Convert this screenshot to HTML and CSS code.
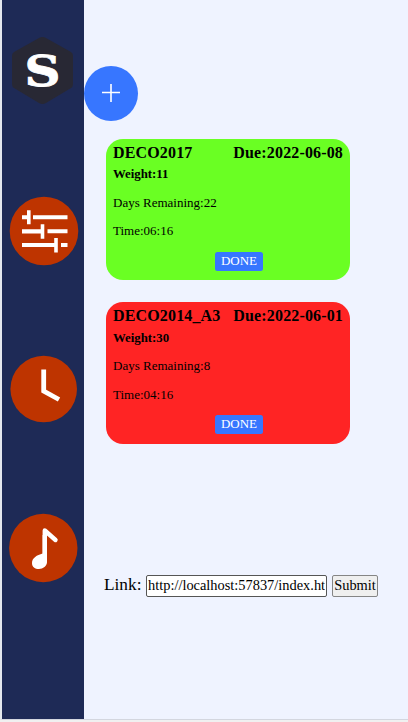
FILE: index.html
```
<!DOCTYPE html>
<html lang="en">
<head>
<meta charset="utf-8">
<title>Tasks</title>
<link rel="stylesheet" href="styles.css">
</head>
<body>
<div class="app">
  <nav class="sidebar">
    <svg class="logo" viewBox="0 0 64 70" width="64" height="70">
      <path d="M28 2Q31.500 0 35 2L60 16Q62 17 62 20V48Q62 51 60 52L35 67Q31.500 69 28 67L3 52Q1 51 1 48V20Q1 17 3 16Z" fill="#282834"/>
      <text class="logo-letter" x="13.500" y="49.500" textLength="36" lengthAdjust="spacingAndGlyphs">S</text>
    </svg>
    <svg class="tune" viewBox="0 0 70 70" width="70" height="70">
      <circle cx="35" cy="35" r="34.300" fill="#be3400"/>
      <g fill="#fff"><path d="M13 19.300h5v-5h3.600v14H18v-5h-5zM24 19.300h34.500v4H24zM13 33.300h18.700v-5h3.600v14.500h-3.600v-5.300H13zM38.500 33.300h20v4h-20zM13 47h32.200v-5h3.600v14.500h-3.600V51H13zM52 47h6.500v4H52z"/></g>
    </svg>
    <svg class="clock" viewBox="0 0 68 68" width="68" height="68">
      <circle cx="34.700" cy="34" r="33.300" fill="#be3400"/>
      <path d="M34.700 14.500V36L50 44.500" fill="none" stroke="#fff" stroke-width="4.800"/>
    </svg>
    <svg class="music" viewBox="0 0 70 70" width="70" height="70">
      <circle cx="35.300" cy="35" r="34.200" fill="#be3400"/>
      <path d="M36.800 48V17.500L47.500 27" fill="none" stroke="#fff" stroke-width="4.400" stroke-linecap="round" stroke-linejoin="round"/>
      <path d="M39 39V49C39 53 35 56 31 56C27 56 24 54 24 50C24 45 29 42 34.600 40.500V22H39Z" fill="#fff"/>
    </svg>
  </nav>
  <main class="main">
    <button class="add" aria-label="Add task"><svg viewBox="0 0 54 55" width="54" height="55"><path d="M18 26.500H36M27 18V36" stroke="#fff" stroke-width="1.600"/></svg></button>
    <section class="card easy">
      <header class="head"><span>DECO2017</span><span class="due">Due:2022-06-08</span></header>
      <p class="weight">Weight:11</p>
      <p class="days">Days Remaining:22</p>
      <p class="time">Time:06:16</p>
      <button class="done">DONE</button>
    </section>
    <section class="card urgent">
      <header class="head"><span>DECO2014_A3</span><span class="due">Due:2022-06-01</span></header>
      <p class="weight">Weight:30</p>
      <p class="days">Days Remaining:8</p>
      <p class="time">Time:04:16</p>
      <button class="done">DONE</button>
    </section>
    <form class="link-form">
      <label for="link">Link:</label>
      <input id="link" type="text" value="http://localhost:57837/index.html">
      <button class="submit" type="button">Submit</button>
    </form>
  </main>
</div>
</body>
</html>
```
FILE: styles.css
```
* { box-sizing: border-box; }
body {
  margin: 0;
  height: 722px;
  overflow: hidden;
  background: #f0f0f0;
  font-family: "Liberation Serif", serif;
  color: #000;
}
button, input { font-family: inherit; margin: 0; }
svg { display: block; flex: none; }
.app {
  display: flex;
  height: 720px;
  border-left: 2px solid #e4e8ee;
  border-bottom: 1px solid #d3d6df;
  background: #eff3ff;
}
.sidebar {
  width: 82px;
  flex: none;
  display: flex;
  flex-direction: column;
  align-items: center;
  background: #1e2a56;
}
.logo { margin-top: 36px; }
.logo-letter {
  font: bold 42px "DejaVu Serif", serif;
  fill: #fff;
  stroke: #fff;
  stroke-width: .8px;
}
.tune { margin: 90px 0 0 2px; }
.clock { margin-top: 89px; }
.music { margin-top: 90px; }
.main { flex: 1; padding-top: 66px; }
.add {
  display: block;
  width: 54px;
  height: 55px;
  padding: 0;
  border: 0;
  border-radius: 50%;
  background: #3776ff;
}
.card {
  width: 244.500px;
  margin-left: 21.500px;
  padding: 4px 7px 0 7.500px;
  border-radius: 17px;
}
.card p { margin: 0; font-size: 13px; line-height: 16px; }
.easy { height: 141px; margin-top: 18px; background: #6aff23; }
.urgent { height: 142px; margin-top: 22px; background: #ff2424; }
.head {
  display: flex;
  justify-content: space-between;
  font-size: 16px;
  font-weight: bold;
  line-height: 19px;
  letter-spacing: .15px;
  white-space: nowrap;
}
.card .weight { margin-top: 4px; font-weight: bold; font-size: 12.800px; }
.card .days { margin-top: 13px; }
.card .time { margin-top: 12px; }
.urgent .weight { margin-top: 5px; }
.urgent .days { margin-top: 12px; }
.urgent .time { margin-top: 13px; }
.done {
  display: block;
  width: 48px;
  height: 19px;
  margin: 13px auto 0 102px;
  padding: 0 0 2px;
  border: 0;
  border-radius: 2.500px;
  background: #3776ff;
  color: #fff;
  font-size: 13px;
  line-height: 16px;
}
.urgent .done { margin-top: 12px; }
.link-form {
  display: flex;
  align-items: center;
  height: 22px;
  margin: 131px 0 0 20px;
}
.link-form label { width: 42px; padding-bottom: 2px; font-size: 17.300px; line-height: 20px; white-space: nowrap; }
.link-form input {
  width: 181px;
  height: 22px;
  padding: 0 1px 2px;
  border: 1px solid #555;
  border-radius: 2px;
  background: #fff;
  color: #000;
  font-size: 14.400px;
}
.submit {
  width: 46px;
  height: 22px;
  margin-left: 5px;
  padding: 0 0 2px;
  border: 1px solid #858585;
  border-radius: 2px;
  background: #efefef;
  color: #000;
  font-size: 14.400px;
}
```
